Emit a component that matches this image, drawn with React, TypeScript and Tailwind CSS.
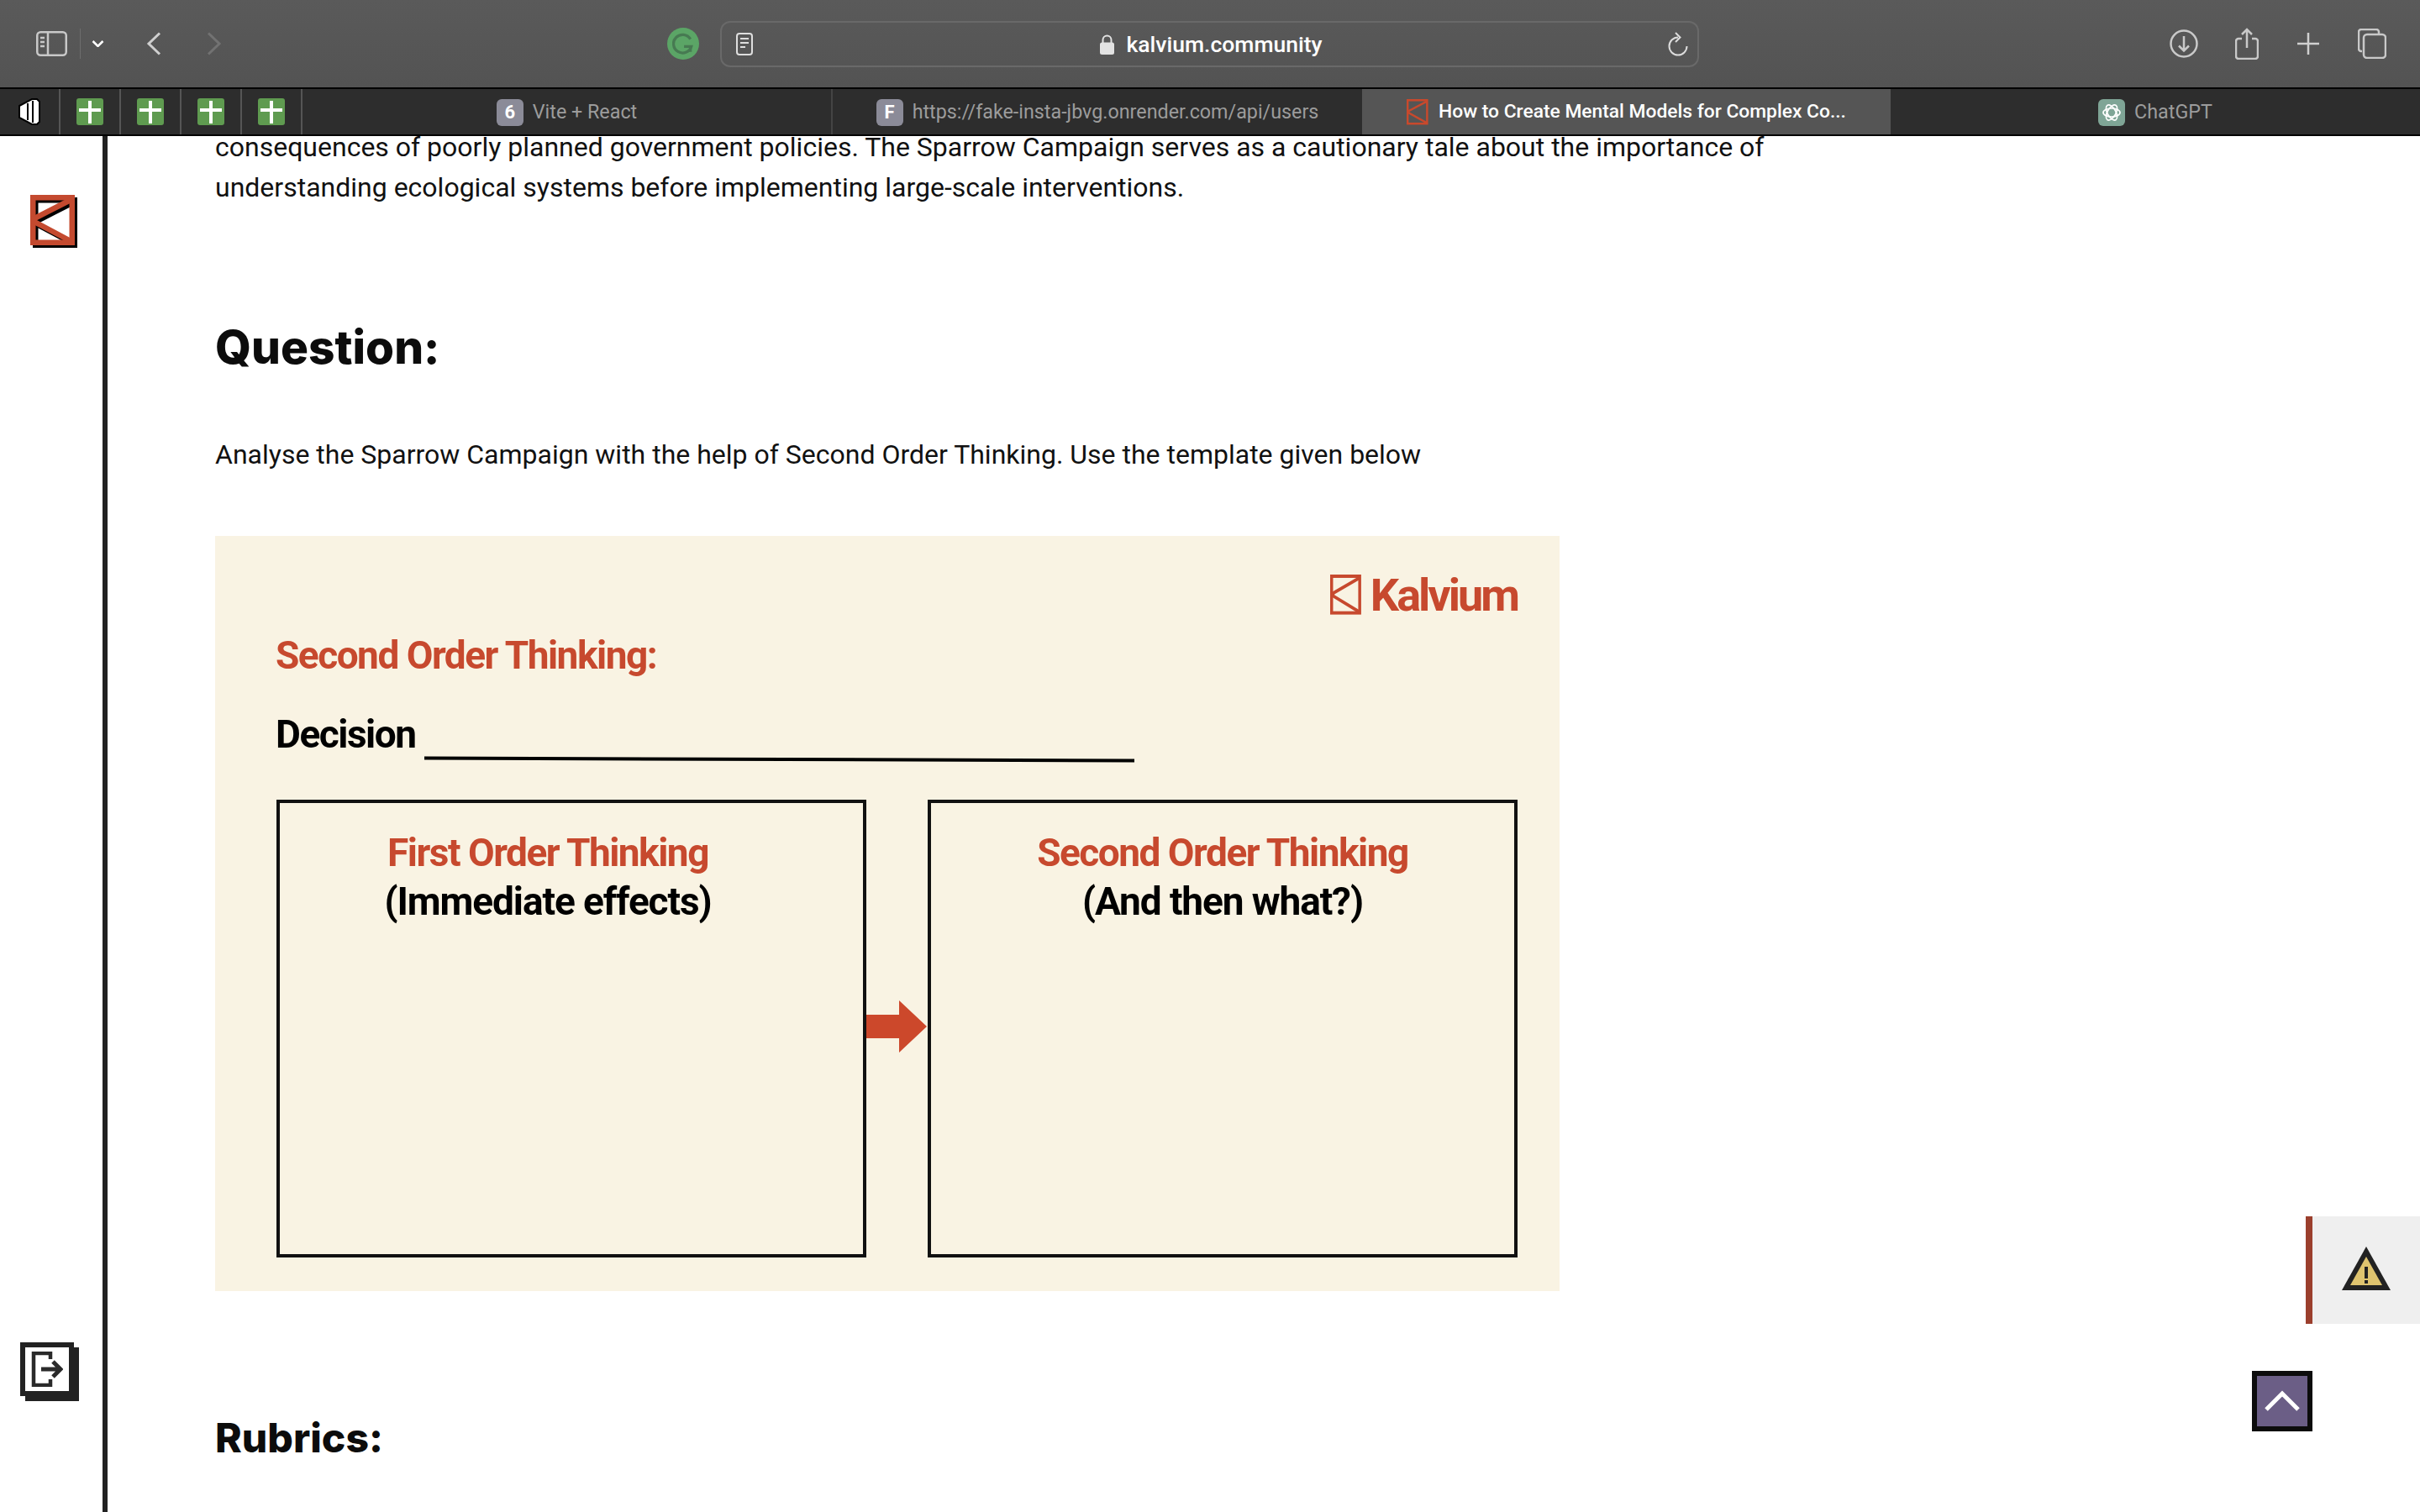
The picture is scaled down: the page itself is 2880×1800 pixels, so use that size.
const Logo = ({ className = "", stroke = 6.5, color = "#c44a2f", shadow = false }: { className?: string; stroke?: number; color?: string; shadow?: boolean }) => {
  const shape = (c: string, dx = 0) => (
    <g transform={`translate(${dx} ${dx})`} fill="none" stroke={c} strokeWidth={stroke}>
      <rect x={stroke / 2} y={stroke / 2} width={53 - stroke} height={60 - stroke} />
      <path d="M50 5 L5 28 L5 32 L50 56" strokeLinejoin="miter" />
    </g>
  );
  return (
    <svg viewBox="0 0 56 63" preserveAspectRatio="none" className={className}>
      {shadow && shape("#000", 3)}
      {shape(color)}
    </svg>
  );
};

const Pinned = () => (
  <div className="flex h-full w-[72px] items-center justify-center border-r-2 border-[#555]">
    <div className="relative h-8 w-8 rounded-[3px] bg-[#5f9b50]">
      <div className="absolute left-[14px] top-[3px] h-[27px] w-1 bg-white" />
      <div className="absolute left-[3px] top-[12px] h-1 w-[26px] bg-white" />
    </div>
  </div>
);

const Favicon = ({ letter, bg = "bg-[#8b8b98]" }: { letter: string; bg?: string }) => (
  <div className={`flex h-8 w-8 items-center justify-center rounded-[6px] text-[22px] font-bold text-white ${bg}`}>{letter}</div>
);

const Tab = ({ children, className = "" }: { children: React.ReactNode; className?: string }) => (
  <div className={`flex h-full items-center justify-center gap-[11px] pt-px ${className}`}>
    {children}
  </div>
);

const Toolbar = () => (
  <div className="flex h-[104px] items-center bg-gradient-to-b from-[#5a5a5a] to-[#535353] text-[#d2d2d2]">
    <svg width="37" height="30" viewBox="0 0 37 30" className="ml-[43px]" fill="none" stroke="#c8c8c8" strokeWidth="2.5">
      <rect x="1.25" y="1.25" width="34.5" height="27.5" rx="4" />
      <path d="M14 1v28M5 8h5M5 13h5M5 18h5" />
    </svg>
    <div className="ml-[15px] h-9 w-px bg-[#6d6d6d]" />
    <svg width="15" height="8" viewBox="0 0 15 8" className="ml-[13px]" fill="none" stroke="#fff" strokeWidth="2.5"><path d="M1.5 1 7.5 7 13.5 1" /></svg>
    <svg width="18" height="28" viewBox="0 0 18 28" className="ml-[50px]" fill="none" stroke="#cfcfcf" strokeWidth="3"><path d="M16 1.5 3 14l13 12.5" /></svg>
    <svg width="18" height="28" viewBox="0 0 18 28" className="ml-[54px]" fill="none" stroke="#727272" strokeWidth="3"><path d="M2 1.5 15 14 2 26.5" /></svg>
    <div className="ml-[530px] flex h-[38px] w-[38px] items-center justify-center rounded-full bg-[#5ba566]">
      <svg width="26" height="26" viewBox="0 0 24 24" fill="none" stroke="#477a52" strokeWidth="3"><path d="M20 7A10 10 0 1 0 21 15H13" /><path d="M20 15v6" /></svg>
    </div>
    <div className="ml-[25px] flex h-[55px] w-[1165px] items-center rounded-[12px] border-2 border-[#696969] pl-[17px] pr-[11px]">
      <svg width="20" height="27" viewBox="0 0 20 27" fill="none" stroke="#dedede" strokeWidth="2">
        <rect x="1" y="1" width="18" height="25" rx="3" />
        <path d="M5 7h10M5 12h10M5 17h6" />
      </svg>
      <div className="flex flex-1 items-center justify-center gap-[14px] pl-[2px] pt-px text-[26.5px] font-medium text-white">
        <svg width="17" height="24" viewBox="0 0 17 24"><path d="M3.5 10V6.5a5 5 0 0 1 10 0V10" fill="none" stroke="#e2e2e2" strokeWidth="2" /><rect y="9.5" width="17" height="14.5" rx="2.5" fill="#e2e2e2" /></svg>
        <span>kalvium.community</span>
      </div>
      <svg width="24" height="29" viewBox="0 0 24 29" fill="none" stroke="#dcdcdc" strokeWidth="2">
        <path d="M12 6.5A10.5 10.5 0 1 0 22.5 17" />
        <path d="M9 1l5.5 5.5L9 12" />
      </svg>
    </div>
    <svg width="34" height="34" viewBox="0 0 34 34" className="ml-[560px]" fill="none" stroke="#c9c9c9" strokeWidth="2.5">
      <circle cx="17" cy="17" r="15.5" />
      <path d="M17 8v17M11 19.5l6 6 6-6" />
    </svg>
    <svg width="28" height="38" viewBox="0 0 28 38" className="ml-[44px]" fill="none" stroke="#c9c9c9" strokeWidth="2.5">
      <path d="M8 13H4a3 3 0 0 0-3 3v18a3 3 0 0 0 3 3h20a3 3 0 0 0 3-3V16a3 3 0 0 0-3-3h-4" />
      <path d="M14 24V2M8 8l6-6 6 6" />
    </svg>
    <svg width="28" height="28" viewBox="0 0 28 28" className="ml-[45px]" fill="none" stroke="#d0d0d0" strokeWidth="2.5"><path d="M14 1v26M1 14h26" /></svg>
    <svg width="34" height="36" viewBox="0 0 34 36" className="ml-[45px]" fill="none" stroke="#c9c9c9" strokeWidth="2.5">
      <path d="M5 27H4a3 3 0 0 1-3-3V4a3 3 0 0 1 3-3h18a3 3 0 0 1 3 3v3" />
      <rect x="7" y="7" width="26" height="28" rx="4" />
    </svg>
  </div>
);

const TabBar = () => (
  <div className="flex h-[58px] items-center border-y-2 border-black bg-[#2d2d2d] font-[Roboto,sans-serif]">
    <div className="flex h-full w-[72px] items-center justify-center border-r-2 border-[#555]">
      <svg width="26" height="32" viewBox="0 0 26 32">
        <path d="M1 9 16 1h6l3 3v24l-3 3h-6L1 23z" fill="#fff" stroke="#000" strokeWidth="2" />
        <path d="M11 6v20M17 3v26" stroke="#000" strokeWidth="2" />
      </svg>
    </div>
    <Pinned />
    <Pinned />
    <Pinned />
    <Pinned />
    <Tab className="w-[631px] border-r-2 border-[#444] text-[23.3px] text-[#9c9c9c]"><Favicon letter="6" /><span>Vite + React</span></Tab>
    <Tab className="w-[630px] text-[23.3px] text-[#9c9c9c]"><Favicon letter="F" /><span>https://fake-insta-jbvg.onrender.com/api/users</span></Tab>
    <Tab className="w-[629px] bg-[#555555] text-[22.8px] font-medium text-white">
      <Logo className="h-8 w-[27px]" stroke={5} color="#c9492c" />
      <span>How to Create Mental Models for Complex Co...</span>
    </Tab>
    <Tab className="w-[630px] text-[23.3px] text-[#9c9c9c]">
      <div className="flex h-8 w-8 items-center justify-center rounded-[6px] bg-[#7fa596]">
        <svg width="24" height="24" viewBox="0 0 24 24" fill="none" stroke="#fff" strokeWidth="1.7">
          <ellipse cx="12" cy="12" rx="10" ry="5" />
          <ellipse cx="12" cy="12" rx="10" ry="5" transform="rotate(60 12 12)" />
          <ellipse cx="12" cy="12" rx="10" ry="5" transform="rotate(120 12 12)" />
        </svg>
      </div>
      <span>ChatGPT</span>
    </Tab>
  </div>
);

const Sidebar = () => (
  <aside className="flex w-[128px] shrink-0 flex-col justify-between border-r-[6px] border-[#222] pb-[132px] pl-[24px] pt-[70px]">
    <Logo className="ml-[12px] h-[63px] w-[56px]" shadow />
    <div className="h-[70px] w-[70px]">
      <div className="flex h-16 w-16 items-center justify-center border-[6px] border-[#222] bg-white shadow-[6px_6px_0_#222]">
        <svg width="38" height="42" viewBox="0 0 38 42" fill="none" stroke="#2a2a2a" strokeWidth="4.5">
          <path d="M23 9V2H3v38h20v-7" />
          <path d="M12 21h22M26 12l9 9-9 9" strokeWidth="5" />
        </svg>
      </div>
    </div>
  </aside>
);

const Worksheet = () => (
  <div className="mt-[73px] flex h-[899px] w-[1600px] flex-col bg-[#f9f3e3] pl-[73px] pr-[49px] pt-[44px] font-[Roboto,sans-serif] font-bold tracking-[-1.5px] blur-[0.5px]">
    <div className="flex items-center justify-end gap-[9px] pr-[1px]">
      <Logo className="h-[50px] w-[39px]" stroke={5} color="#c7492e" />
      <span className="text-[54px] leading-[54px] tracking-[-3px] text-[#c7492e]">Kalvium</span>
    </div>
    <div className="-ml-px mt-[16px] text-[46px] leading-[56px] text-[#c7492e]">Second Order Thinking:</div>
    <div className="relative -ml-px mt-[38px] text-[46px] leading-[56px] text-black">
      <span>Decision</span>
      <div className="absolute left-[177px] top-[56px] h-1 w-[845px] rotate-[0.2deg] bg-black" />
    </div>
    <div className="mt-[50px] flex h-[545px] items-stretch">
      <div className="w-[702px] border-4 border-[#111] pr-[56px] pt-[30px] text-center text-[46px] leading-[58px] text-black">
        <div className="text-[#c7492e]">First Order Thinking</div>
        <div className="tracking-[-1.1px]">(Immediate effects)</div>
      </div>
      <svg width="73" height="62" viewBox="0 0 73 62" className="mt-[239px] shrink-0"><path d="M0 17h39V0l33 31-33 31V45H0z" fill="#cc482b" /></svg>
      <div className="w-[702px] border-4 border-[#111] pt-[30px] text-center text-[46px] leading-[58px] text-black">
        <div className="text-[#c7492e]">Second Order Thinking</div>
        <div className="tracking-[-1.1px]">(And then what?)</div>
      </div>
    </div>
  </div>
);

const Main = () => (
  <main className="min-w-0 flex-1 overflow-hidden pl-[128px] font-[Roboto,sans-serif] text-[32px] leading-[48px] text-[#111]">
    <p className="-mt-[11px] w-[2000px]">
      consequences of poorly planned government policies. The Sparrow Campaign serves as a cautionary tale about the importance of
      <br />
      understanding ecological systems before implementing large-scale interventions.
    </p>
    <h2 className="mt-[132px] font-[Inter,sans-serif] text-[55px] font-extrabold leading-[68px] text-[#0c0c0c]">Question:</h2>
    <p className="mt-[70px]">Analyse the Sparrow Campaign with the help of Second Order Thinking. Use the template given below</p>
    <Worksheet />
    <h2 className="mt-[145px] font-[Inter,sans-serif] text-[48px] font-extrabold leading-[60px] text-[#0c0c0c]">Rubrics:</h2>
  </main>
);

export default function App() {
  return (
    <div className="relative flex h-[1800px] w-[2880px] flex-col overflow-hidden bg-white font-[Roboto,sans-serif]">
      <Toolbar />
      <TabBar />
      <div className="flex min-h-0 flex-1">
        <Sidebar />
        <Main />
      </div>
      <div className="absolute left-[2744px] top-[1448px] flex h-[128px] w-[136px] items-center border-l-[8px] border-[#9b3f2d] bg-[#efefef] pl-[35px]">
        <svg width="58" height="52" viewBox="0 0 58 52" className="mb-[4px]">
          <path d="M29 0 58 52H0z" fill="#222" />
          <path d="M29 12 48 46H10z" fill="#dfc46f" />
          <path d="M27 24h4v14h-4zM27 40h4v4h-4z" fill="#222" />
        </svg>
      </div>
      <div className="absolute left-[2680px] top-[1632px] flex h-[72px] w-[72px] items-center justify-center border-[6px] border-[#0c0c0c] bg-[#6b5e86]">
        <svg width="42" height="26" viewBox="0 0 42 26" fill="none" stroke="#fff" strokeWidth="5" className="mb-[2px]"><path d="M2 24 21 5l19 19" /></svg>
      </div>
    </div>
  );
}
